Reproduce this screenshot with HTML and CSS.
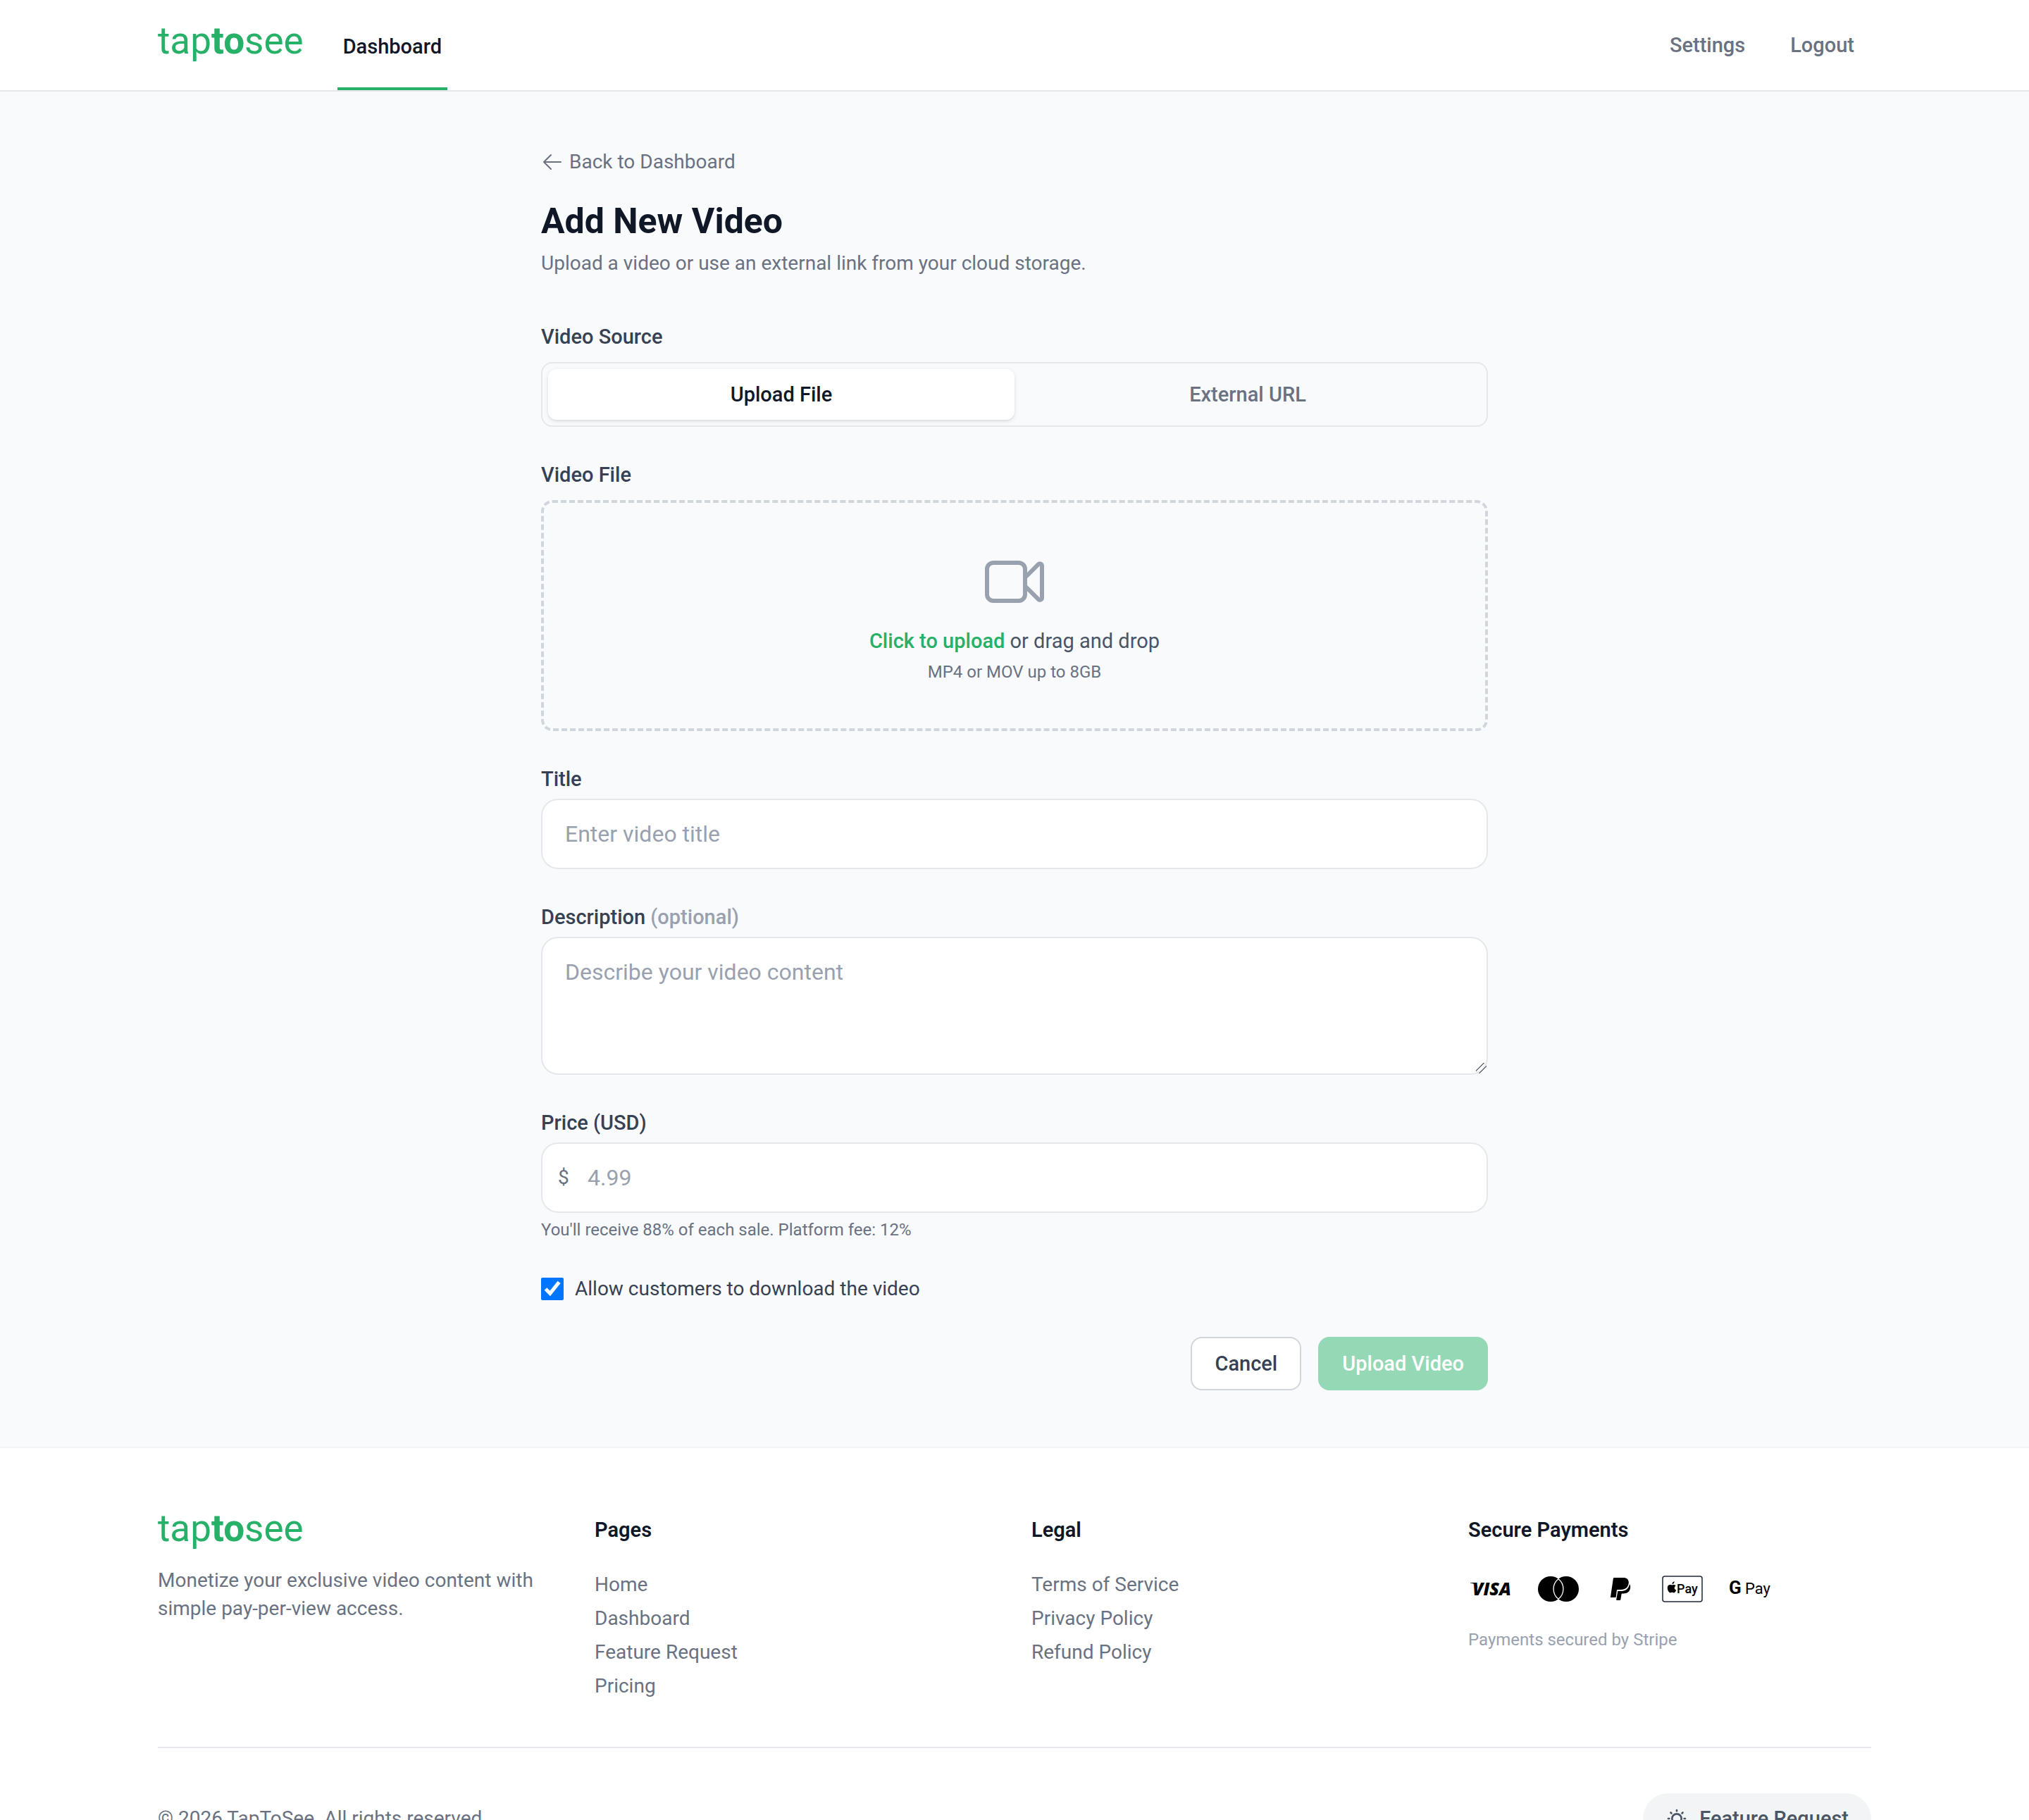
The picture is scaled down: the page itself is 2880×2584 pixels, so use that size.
FILE: index.html
```html
<!DOCTYPE html>
<html lang="en">
<head>
    <meta charset="UTF-8">
    <meta name="viewport" content="width=device-width, initial-scale=1.0">
    <title>Add New Video - TapToSee</title>
    <link rel="stylesheet" href="styles.css">
</head>
<body>
    <header class="site-header">
        <div class="container header-inner">
            <a href="#" class="logo">tap<b>to</b>see</a>
            <nav class="main-nav">
                <a href="#" class="nav-link active">Dashboard</a>
            </nav>
            <div class="user-nav">
                <a href="#" class="user-link">Settings</a>
                <button type="button" class="user-link">Logout</button>
            </div>
        </div>
    </header>

    <main class="content">
        <a href="#" class="back-link">
            <svg class="icon" viewBox="0 0 24 24" fill="none" stroke="currentColor" stroke-width="1.5" stroke-linecap="round" stroke-linejoin="round">
                <path d="M10.5 19.5 3 12m0 0 7.5-7.5M3 12h18"/>
            </svg>
            Back to Dashboard
        </a>
        <h1>Add New Video</h1>
        <p class="subtitle">Upload a video or use an external link from your cloud storage.</p>

        <form id="videoForm" class="video-form">
            <div class="field" role="group" aria-labelledby="source-label">
                <span class="label" id="source-label">Video Source</span>
                <div class="toggle">
                    <button type="button" class="toggle-btn selected">Upload File</button>
                    <button type="button" class="toggle-btn">External URL</button>
                </div>
            </div>

            <div class="field">
                <label class="label" for="video">Video File</label>
                <label class="dropzone" for="video">
                    <svg class="dropzone-icon" viewBox="0 0 24 24" fill="none" stroke="currentColor" stroke-width="1.5" stroke-linecap="round" stroke-linejoin="round">
                        <path d="m15.75 10.5 4.72-4.72a.75.75 0 0 1 1.28.53v11.38a.75.75 0 0 1-1.28.53l-4.72-4.72M4.5 18.75h9a2.25 2.25 0 0 0 2.25-2.25v-9a2.25 2.25 0 0 0-2.25-2.25h-9A2.25 2.25 0 0 0 2.25 7.5v9a2.25 2.25 0 0 0 2.25 2.25Z"/>
                    </svg>
                    <span class="dropzone-text"><span class="green">Click to upload</span> or drag and drop</span>
                    <span class="dropzone-hint">MP4 or MOV up to 8GB</span>
                </label>
                <input type="file" id="video" name="video" accept="video/mp4,video/quicktime" hidden>
            </div>

            <div class="field tight">
                <label class="label" for="title">Title</label>
                <input type="text" class="input" id="title" name="title" placeholder="Enter video title">
            </div>

            <div class="field tight">
                <label class="label" for="description">Description <span class="optional">(optional)</span></label>
                <textarea class="input" id="description" name="description" rows="3" placeholder="Describe your video content"></textarea>
            </div>

            <div class="field tight">
                <label class="label" for="price">Price (USD)</label>
                <div class="price-box">
                    <span class="currency">$</span>
                    <input type="number" class="input price-input" id="price" name="price" min="0" step="0.01" placeholder="4.99">
                </div>
                <p class="help">You'll receive 88% of each sale. Platform fee: 12%</p>
            </div>

            <div class="check-row">
                <input type="checkbox" id="download" name="download" checked>
                <label for="download">Allow customers to download the video</label>
            </div>

            <div class="actions">
                <button type="button" class="btn btn-cancel">Cancel</button>
                <button type="submit" class="btn btn-upload" disabled>Upload Video</button>
            </div>
        </form>
    </main>

    <footer class="site-footer">
        <div class="container">
            <div class="footer-grid">
                <div>
                    <a href="#" class="logo">tap<b>to</b>see</a>
                    <p class="tagline">Monetize your exclusive video content with simple pay-per-view access.</p>
                </div>
                <div>
                    <h3>Pages</h3>
                    <ul>
                        <li><a href="#">Home</a></li>
                        <li><a href="#">Dashboard</a></li>
                        <li><a href="#">Feature Request</a></li>
                        <li><a href="#">Pricing</a></li>
                    </ul>
                </div>
                <div>
                    <h3>Legal</h3>
                    <ul>
                        <li><a href="#">Terms of Service</a></li>
                        <li><a href="#">Privacy Policy</a></li>
                        <li><a href="#">Refund Policy</a></li>
                    </ul>
                </div>
                <div>
                    <h3>Secure Payments</h3>
                    <div class="payments">
                        <svg class="pay-icon" viewBox="0 0 64 48" role="img" aria-label="Visa">
                            <path d="M3 15h8l3 8C12 18.500 8.500 16.200 3 15.500z"/>
                            <text x="6" y="33" class="visa-text">VISA</text>
                        </svg>
                        <svg class="pay-icon" viewBox="0 0 64 48" role="img" aria-label="Mastercard">
                            <circle cx="21" cy="24" r="18"/>
                            <circle cx="43" cy="24" r="18"/>
                            <path d="M32 9.800a18 18 0 0 1 0 28.400a18 18 0 0 1 0-28.400z" fill="#000" stroke="#fff" stroke-width="1.300"/>
                        </svg>
                        <svg class="pay-icon narrow" viewBox="0 0 48 48" role="img" aria-label="PayPal">
                            <path d="M15 8h13.500c4.500 0 7.500 2.800 7.300 7-.4 6.400-4.600 10-11 10h-4.600c-.7 0-1.200.4-1.300 1.100L17.600 36H10.600c-.4 0-.7-.3-.6-.8L13.900 9c.1-.6.500-1 1.100-1z"/>
                            <path d="M37 17.300c1.300 1.600 1.500 3.700 1 6-1.200 5-4.500 7.200-9.500 7.200h-1.700c-.7 0-1.200.4-1.300 1.100l-1.200 7.400c-.1.600-.6 1-1.200 1H18.700c-.4 0-.6-.3-.5-.7L20.300 27h5.100c6.300 0 10.200-3.400 11.600-9.700z"/>
                        </svg>
                        <svg class="pay-icon" viewBox="0 0 64 48" role="img" aria-label="Apple Pay">
                            <rect x="4" y="6" width="56" height="36" rx="3" fill="none" stroke="#1e2939" stroke-width="1.500"/>
                            <path d="M19.600 16.200c.9-1.100 1.100-2 1-2.900-1.600.2-3.300 1.700-3.100 3.700.9 0 1.600-.3 2.100-.8zM20.700 22.700c0-1.800 1.200-2.700 1.900-3.200-1.500-1.900-3.500-1.600-4.300-1.300-.9.300-1.600.3-2.600-.1-2.400-.8-4.900.7-4.900 4.200 0 2.700 1.700 6.900 4 7.100.9.100 1.500-.6 2.600-.6 1.100 0 1.700.7 2.600.6 1.500-.1 2.700-2.100 3.200-3.900-1.100-.4-2.500-1.300-2.500-2.800z"/>
                            <text x="24" y="30" class="apple-text">Pay</text>
                        </svg>
                        <svg class="pay-icon" viewBox="0 0 64 48" role="img" aria-label="Google Pay">
                            <text x="2" y="31" class="google-g">G</text>
                            <text x="25" y="31" class="google-text">Pay</text>
                        </svg>
                    </div>
                    <p class="secured">Payments secured by Stripe</p>
                </div>
            </div>
            <div class="footer-bottom">
                <p>© 2026 TapToSee. All rights reserved.</p>
                <a href="#" class="feature-btn">
                    <svg class="icon" viewBox="0 0 24 24" fill="none" stroke="currentColor" stroke-width="2" stroke-linecap="round" stroke-linejoin="round">
                        <path d="M9.663 17h4.673M12 3v1m6.364 1.636l-.707.707M21 12h-1M4 12H3m3.343-5.657l-.707-.707m2.828 9.900a5 5 0 117.072 0l-.548.547A3.374 3.374 0 0014 18.469V19a2 2 0 11-4 0v-.531c0-.895-.356-1.754-.988-2.386l-.548-.547z"/>
                    </svg>
                    Feature Request
                </a>
            </div>
        </div>
    </footer>
</body>
</html>
```

FILE: styles.css
```css
* {
    box-sizing: border-box;
}
body {
    margin: 0;
    font-family: Roboto, "Liberation Sans", sans-serif;
    font-size: 28px;
    line-height: 40px;
    color: #6a7282;
    background-color: #f9fafc;
}
h1, h3, p, ul {
    margin: 0;
    padding: 0;
}
a {
    color: inherit;
    text-decoration: none;
}
button, input, textarea {
    font-family: inherit;
    font-size: inherit;
    line-height: inherit;
}
button {
    cursor: pointer;
}
.container {
    max-width: 2560px;
    margin: 0 auto;
    padding: 0 64px;
}
.icon {
    width: 32px;
    height: 32px;
    flex-shrink: 0;
}
.nav-link, .user-link, .label, .toggle-btn, .btn, .feature-btn {
    font-size: 29px;
    font-weight: 500;
}

/* Header */
.site-header {
    background-color: #fff;
    border-bottom: 2px solid #e5e7eb;
}
.header-inner {
    display: flex;
    align-items: center;
    height: 128px;
}
.logo {
    display: block;
    padding-bottom: 12px;
    font-size: 53px;
    line-height: 36px;
    color: #27b067;
}
.main-nav {
    display: flex;
    height: 100%;
    margin-left: 48px;
}
.nav-link {
    display: flex;
    align-items: center;
    padding: 8px 8px 0;
    border-bottom: 4px solid transparent;
}
.nav-link.active {
    color: #101828;
    border-color: #27b067;
}
.user-nav {
    display: flex;
    gap: 16px;
    margin-left: auto;
}
.user-link {
    padding: 16px 24px;
    color: #6a7282;
    background: none;
    border: none;
}

/* Form page */
.content {
    max-width: 1344px;
    margin: 0 auto;
    padding: 80px 0;
}
.back-link {
    display: flex;
    align-items: center;
    gap: 8px;
    margin-bottom: 32px;
}
h1 {
    font-size: 50px;
    line-height: 64px;
    font-weight: 700;
    color: #101828;
}
.subtitle {
    margin-top: 8px;
}
.video-form {
    display: flex;
    flex-direction: column;
    gap: 48px;
    margin-top: 64px;
}
.field {
    display: flex;
    flex-direction: column;
    gap: 16px;
}
.field.tight {
    gap: 8px;
}
.label {
    color: #364153;
}
.optional {
    color: #99a1af;
}
.toggle {
    display: flex;
    padding: 8px;
    border: 2px solid #e5e7eb;
    border-radius: 16px;
}
.toggle-btn {
    flex: 1;
    padding: 16px;
    color: #6a7282;
    background: none;
    border: none;
    border-radius: 12px;
}
.toggle-btn.selected {
    color: #101828;
    background-color: #fff;
    box-shadow: 0 2px 6px rgba(0, 0, 0, 0.1), 0 2px 4px -2px rgba(0, 0, 0, 0.1);
}
.dropzone {
    display: flex;
    flex-direction: column;
    align-items: center;
    padding: 64px;
    border: 4px dashed #d1d5dc;
    border-radius: 16px;
    cursor: pointer;
}
.dropzone-icon {
    width: 96px;
    height: 96px;
    color: #99a1af;
}
.dropzone-text {
    margin-top: 16px;
    font-size: 29px;
    color: #4a5565;
}
.green {
    font-weight: 500;
    color: #27b067;
}
.dropzone-hint {
    margin-top: 8px;
    font-size: 24px;
    line-height: 32px;
}
.input {
    display: block;
    width: 100%;
    padding: 24px 32px;
    font-size: 32px;
    line-height: 48px;
    color: #101828;
    background-color: #fff;
    border: 2px solid #e5e7eb;
    border-radius: 24px;
}
input.input {
    height: 100px;
}
textarea.input {
    resize: vertical;
}
textarea::-webkit-resizer {
    background: linear-gradient(135deg, transparent 34%, #6a7282 34%, #6a7282 41%, transparent 41%, transparent 60%, #6a7282 60%, #6a7282 67%, transparent 67%);
}
.input::placeholder {
    color: #99a1af;
}
.price-box {
    position: relative;
}
/* sits over the left padding of the price input */
.currency {
    position: absolute;
    top: 30px;
    left: 24px;
}
.price-input {
    padding-left: 64px;
}
.help {
    font-size: 24px;
    line-height: 32px;
}
.check-row {
    display: flex;
    align-items: center;
    gap: 16px;
    color: #364153;
}
.check-row input {
    width: 32px;
    height: 32px;
    margin: 0;
}
.actions {
    display: flex;
    justify-content: flex-end;
    gap: 24px;
}
.btn {
    padding: 16px 32px;
    border: 2px solid transparent;
    border-radius: 16px;
}
.btn-cancel {
    color: #364153;
    background-color: #fff;
    border-color: #d1d5dc;
}
.btn-upload {
    color: #fff;
    background-color: #94d8b6;
}

/* Footer */
.site-footer {
    padding: 96px 0;
    background-color: #fff;
    border-top: 2px solid #f3f4f6;
}
.footer-grid {
    display: grid;
    grid-template-columns: repeat(4, 1fr);
    gap: 48px;
    padding-bottom: 62px;
}
.tagline {
    margin-top: 24px;
}
h3 {
    margin-bottom: 32px;
    font-size: 29px;
    line-height: 40px;
    font-weight: 600;
    color: #101828;
}
.footer-grid ul {
    padding-top: 2px;
    list-style: none;
    line-height: 48px;
}
.payments {
    display: flex;
    align-items: center;
    gap: 32px;
    height: 64px;
}
.pay-icon {
    width: 64px;
    height: 48px;
}
.pay-icon.narrow {
    width: 48px;
}
.visa-text {
    font: italic 800 25px "Open Sans", sans-serif;
}
.apple-text {
    font: 500 18px Roboto, sans-serif;
}
.google-g {
    font: 700 26px Roboto, sans-serif;
}
.google-text {
    font: 400 22px Roboto, sans-serif;
}
.secured {
    margin-top: 24px;
    font-size: 24px;
    line-height: 32px;
    color: #99a1af;
}
.footer-bottom {
    display: flex;
    justify-content: space-between;
    align-items: center;
    padding-top: 64px;
    border-top: 2px solid #e5e7eb;
}
.feature-btn {
    display: flex;
    align-items: center;
    gap: 16px;
    padding: 16px 32px;
    color: #4a5565;
    background-color: #f3f4f6;
    border-radius: 36px;
}
```
